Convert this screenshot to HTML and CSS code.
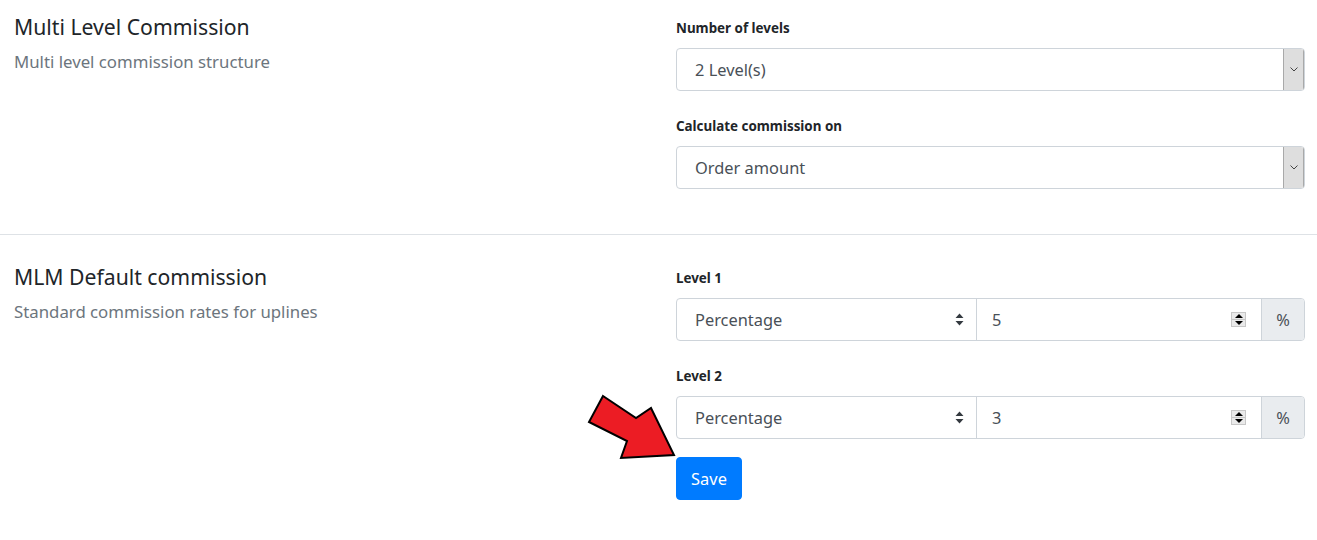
FILE: index.html
```html
<!DOCTYPE html>
<html>
<head>
<meta charset="utf-8">
<link rel="stylesheet" href="styles.css">
</head>
<body>
<div class="page">
  <section class="section first">
    <div class="intro">
      <h2 class="title">Multi Level Commission</h2>
      <p class="desc">Multi level commission structure</p>
    </div>
    <div class="fields">
      <div class="field">
        <label class="label">Number of levels</label>
        <div class="native-select">
          <span class="value">2 Level(s)</span>
          <span class="drop"><svg width="8" height="5" viewBox="0 0 8 5"><path d="M0.5 0.5 L4 4 L7.5 0.5" fill="none" stroke="#444" stroke-width="1"/></svg></span>
        </div>
      </div>
      <div class="field">
        <label class="label">Calculate commission on</label>
        <div class="native-select">
          <span class="value">Order amount</span>
          <span class="drop"><svg width="8" height="5" viewBox="0 0 8 5"><path d="M0.5 0.5 L4 4 L7.5 0.5" fill="none" stroke="#444" stroke-width="1"/></svg></span>
        </div>
      </div>
    </div>
  </section>
  <section class="section second">
    <div class="intro">
      <h2 class="title">MLM Default commission</h2>
      <p class="desc">Standard commission rates for uplines</p>
    </div>
    <div class="fields">
      <div class="field">
        <label class="label">Level 1</label>
        <div class="input-group">
          <div class="custom-select">
            <span class="value">Percentage</span>
            <svg class="updown" width="9" height="13" viewBox="0 0 9 13"><path d="M4.5 0.5 L8.5 5 L0.5 5 Z M0.5 8 L8.5 8 L4.5 12.5 Z" fill="#343a40"/></svg>
          </div>
          <div class="number">
            <span class="value">5</span>
            <span class="spin"><span class="up"></span><span class="dn"></span></span>
          </div>
          <div class="addon">%</div>
        </div>
      </div>
      <div class="field">
        <label class="label">Level 2</label>
        <div class="input-group">
          <div class="custom-select">
            <span class="value">Percentage</span>
            <svg class="updown" width="9" height="13" viewBox="0 0 9 13"><path d="M4.5 0.5 L8.5 5 L0.5 5 Z M0.5 8 L8.5 8 L4.5 12.5 Z" fill="#343a40"/></svg>
          </div>
          <div class="number">
            <span class="value">3</span>
            <span class="spin"><span class="up"></span><span class="dn"></span></span>
          </div>
          <div class="addon">%</div>
        </div>
      </div>
      <button class="btn-save">Save</button>
    </div>
  </section>
  <svg class="pointer" width="100" height="75" viewBox="580 390 100 75">
    <polygon points="603,396 636,418 651,408 674,455 621,458 627,441 589,422" fill="#ec1c24" stroke="#000" stroke-width="2" stroke-linejoin="miter"/>
  </svg>
</div>
</body>
</html>
```
FILE: styles.css
```css
* { box-sizing: border-box; }
html, body { margin: 0; padding: 0; background: #fff; }
body {
  font-family: "Noto Sans", "Open Sans", sans-serif;
  color: #212529;
}
.page { position: relative; width: 1317px; }
.section {
  display: grid;
  grid-template-columns: 662px 629px;
  padding: 0 12px 0 14px;
}
.section.first { padding-top: 15px; padding-bottom: 45px; border-bottom: 1px solid #dee2e6; }
.section.second { padding-top: 30px; padding-bottom: 40px; }
.title {
  margin: 0;
  font-size: 21.2px;
  line-height: 24px;
  font-weight: 400;
}
.desc {
  margin: 11px 0 0;
  font-size: 16.8px;
  line-height: 24px;
  color: #6c757d;
}
.fields { display: flex; flex-direction: column; padding-top: 3px; }
.field { display: flex; flex-direction: column; margin-bottom: 25px; }
.first .field:last-child { margin-bottom: 0; }
.label {
  font-size: 13.4px;
  font-weight: 700;
  line-height: 20px;
  margin-bottom: 10px;
}
.native-select {
  height: 43px;
  border: 1px solid #ced4da;
  border-radius: 4px;
  display: flex;
  align-items: center;
  justify-content: space-between;
  padding-left: 18px;
  font-size: 16.4px;
  color: #495057;
  overflow: hidden;
}
.drop {
  width: 21px;
  align-self: stretch;
  background: #dedede;
  border-left: 1px solid #a9a9a9;
  border-right: 1px solid #a9a9a9;
  display: flex;
  align-items: center;
  justify-content: center;
}
.input-group {
  display: flex;
  height: 43px;
  border: 1px solid #ced4da;
  border-radius: 4px;
  font-size: 16.4px;
  color: #495057;
  overflow: hidden;
}
.custom-select {
  width: 300px;
  display: flex;
  align-items: center;
  justify-content: space-between;
  padding: 0 12px 0 18px;
  border-right: 1px solid #ced4da;
}
.number {
  width: 285px;
  display: flex;
  align-items: center;
  justify-content: space-between;
  padding: 0 15px 0 15px;
  border-right: 1px solid #ced4da;
}
.spin {
  width: 15px;
  height: 15px;
  display: flex;
  flex-direction: column;
  border: 1px solid #c7c7c7;
  background: #eaeaea;
}
.spin .up, .spin .dn { flex: 1; position: relative; }
.spin .up { border-bottom: 1px solid #c7c7c7; }
.spin .up::after {
  content: ""; position: absolute; left: 3px; top: 1px;
  border-left: 4px solid transparent; border-right: 4px solid transparent;
  border-bottom: 4px solid #000;
}
.spin .dn::after {
  content: ""; position: absolute; left: 3px; top: 1px;
  border-left: 4px solid transparent; border-right: 4px solid transparent;
  border-top: 4px solid #000;
}
.addon {
  flex: 1;
  background: #e9ecef;
  display: flex;
  align-items: center;
  justify-content: center;
}
.btn-save {
  align-self: flex-start;
  margin-top: -7px;
  width: 66px;
  height: 43px;
  background: #007bff;
  color: #fff;
  border: 1px solid #007bff;
  border-radius: 4px;
  font-family: inherit;
  font-size: 16.4px;
}
.pointer { position: absolute; left: 580px; top: 390px; }
```
